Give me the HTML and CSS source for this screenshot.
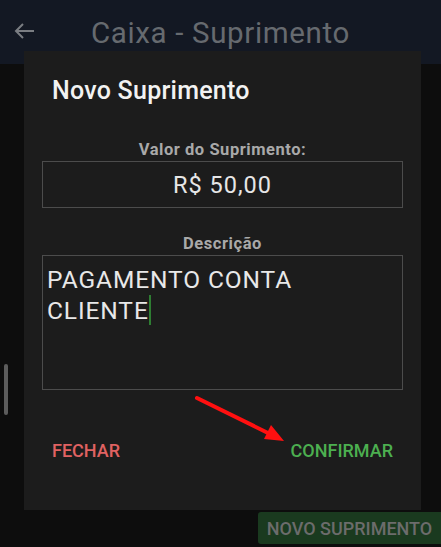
FILE: index.html
```html
<!DOCTYPE html>
<html>
  <head>
    <title>Caixa - Suprimento</title>
    <meta charset="utf-8" />
    <meta name="viewport" content="width=device-width, initial-scale=1.0" />
    <link rel="stylesheet" href="styles.css">
  </head>
  <body>
    <header class="topbar">
      <svg class="back" width="24" height="20" viewBox="0 0 24 20">
        <path d="M2 10H20M9 3L2 10L9 17" fill="none" stroke="currentColor" stroke-width="2" />
      </svg>
      <h1 class="title">Caixa - Suprimento</h1>
    </header>

    <main class="content"></main>

    <footer class="footer">
      <button class="btn-new">NOVO SUPRIMENTO</button>
    </footer>

    <div class="scrollbar"></div>

    <div class="dialog">
      <h2 class="dialog-title">Novo Suprimento</h2>

      <label class="field-label">Valor do Suprimento:</label>
      <div class="field-value">R$ 50,00</div>

      <label class="field-label desc-label">Descrição</label>
      <div class="field-text">PAGAMENTO CONTA CLIENTE<span class="caret"></span></div>

      <div class="actions">
        <span class="action cancel">FECHAR</span>
        <span class="action confirm">CONFIRMAR</span>
      </div>
    </div>

    <!-- seta de destaque -->
    <svg class="pointer" width="441" height="547" viewBox="0 0 441 547">
      <line x1="197" y1="398" x2="270" y2="434" stroke="#ff1010" stroke-width="4" stroke-linecap="round" />
      <polygon points="284,441 264,439 271,425" fill="#ff1010" />
    </svg>
  </body>
</html>
```

FILE: styles.css
```css
* {
  box-sizing: border-box;
}
html,
body {
  height: 100%;
}
body {
  margin: 0;
  background: #0d0d0d;
  font-family: Roboto, "Liberation Sans", sans-serif;
  display: flex;
  flex-direction: column;
  position: relative;
  overflow: hidden;
}

.topbar {
  height: 64px;
  background: #131823;
  display: flex;
  align-items: center;
  justify-content: center;
  position: relative;
  padding-top: 1px;
}
.back {
  position: absolute;
  left: 14px;
  top: 21px;
  color: #7a7d82;
}
.title {
  margin: 0;
  font-size: 29.5px;
  letter-spacing: 0.65px;
  font-weight: 400;
  color: #666a6f;
  line-height: 64px;
}

.content {
  flex: 1;
}

.footer {
  display: flex;
  justify-content: flex-end;
  padding-bottom: 3px;
}
.btn-new {
  width: 183px;
  height: 32px;
  border: none;
  border-radius: 3px 0 0 3px;
  background: #1a3a1f;
  color: #6c6c6c;
  font-family: inherit;
  font-size: 18px;
  font-weight: 500;
  padding: 0;
}

.scrollbar {
  position: absolute;
  left: 4px;
  top: 364px;
  width: 4px;
  height: 51px;
  border-radius: 2px;
  background: #5c5c5c;
}

.dialog {
  position: absolute;
  left: 24px;
  top: 51px;
  width: 397px;
  height: 459px;
  background: #1c1c1c;
  padding: 25.5px 18px 0;
  display: flex;
  flex-direction: column;
}
.dialog-title {
  margin: 0 0 36px 10px;
  font-size: 25px;
  letter-spacing: 0.25px;
  line-height: 28px;
  font-weight: 500;
  color: #f2f2f2;
}
.field-label {
  display: block;
  text-align: center;
  font-size: 16.5px;
  letter-spacing: 0.55px;
  line-height: 18px;
  font-weight: 700;
  color: #a9a9a9;
  margin-bottom: 2.5px;
}
.desc-label {
  margin-top: 26.5px;
}
.field-value {
  height: 47px;
  border: 1px solid #4c4c4c;
  text-align: center;
  font-size: 23.5px;
  letter-spacing: 1px;
  line-height: 43px;
  padding-top: 2px;
  color: #e6e6e6;
}
.field-text {
  height: 135px;
  border: 1px solid #4c4c4c;
  padding: 8.4px 60px 0 4px;
  font-size: 24.5px;
  letter-spacing: 0.9px;
  line-height: 31px;
  color: #e8e8e8;
}
.caret {
  display: inline-block;
  width: 2px;
  height: 30px;
  margin-left: 0;
  vertical-align: -6px;
  background: #2e7d32;
}

.actions {
  display: flex;
  justify-content: space-between;
  margin-top: 50px;
  padding: 0 10px;
}
.action {
  font-size: 18px;
  line-height: 22px;
  font-weight: 500;
}
.cancel {
  color: #e06262;
}
.confirm {
  color: #4caf50;
}

.pointer {
  position: absolute;
  left: 0;
  top: 0;
}
```
